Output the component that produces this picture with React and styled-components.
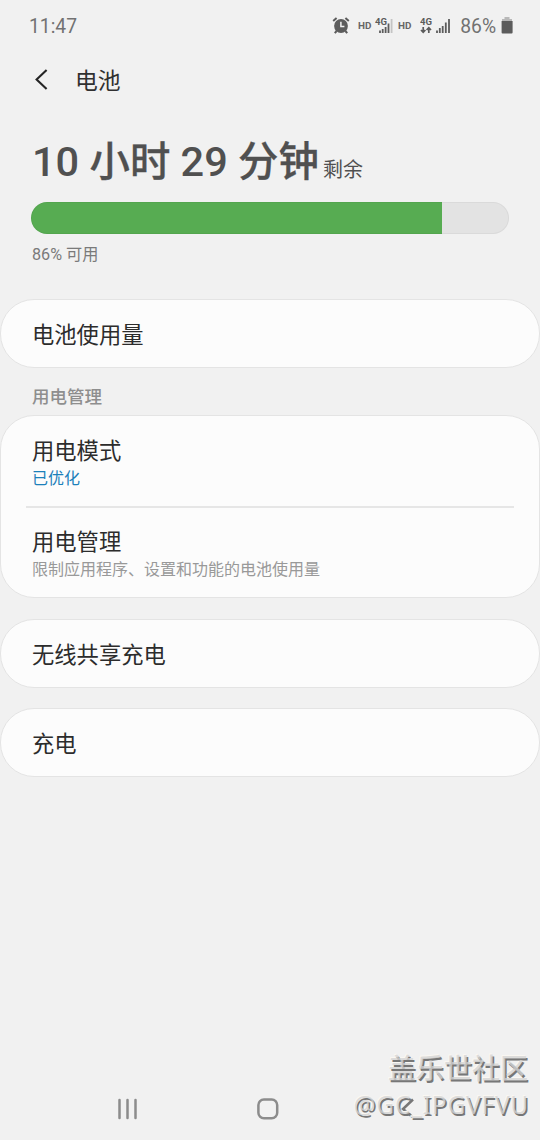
import React from 'react'
import styled, { createGlobalStyle } from 'styled-components'

const GlobalStyle = createGlobalStyle`
  * {
    box-sizing: border-box;
  }
  body {
    margin: 0;
    background-color: #f1f1f1;
    font-family: Roboto, "Noto Sans CJK SC", sans-serif;
  }
`;

const Screen = styled.div`
  position: relative;
  display: flex;
  flex-direction: column;
  width: 540px;
  height: 1140px;
  background-color: #f1f1f1;
  overflow: hidden;
`;

const StatusBar = styled.div`
  display: flex;
  justify-content: space-between;
  align-items: center;
  height: 52px;
  padding: 0 27px 0 29px;
  color: #727272;
  font-size: 19.3px;
`;

const Clock = styled.span`
  padding-top: 2px;
  line-height: 24px;
`;

const StatusIcons = styled.div`
  display: flex;
  align-items: center;
`;

const StatusSvg = styled.svg`
  display: block;
  margin-right: ${props => props.$gap || 0}px;
`;

const Percent = styled.span`
  margin-right: 5px;
  padding-top: 2px;
  line-height: 24px;
`;

const Header = styled.header`
  display: flex;
  align-items: center;
  height: 56px;
  padding-left: 34px;
`;

const Title = styled.h1`
  margin: 0 0 0 26px;
  padding-top: 4px;
  color: #303030;
  font-size: 22.8px;
  font-weight: 400;
  line-height: 32px;
`;

const Summary = styled.section`
  height: 191px;
  padding: 29px 31px 0;
`;

const Remaining = styled.div`
  display: flex;
  align-items: baseline;
  height: 65px;
  padding-left: 1px;
  color: #505050;
  line-height: 50px;
  white-space: nowrap;
`;

const Time = styled.span`
  font-size: 41.5px;
  font-weight: 500;
`;

const Unit = styled.span`
  font-size: 40.4px;
  -webkit-text-stroke: .3px #505050;
`;

const Left = styled.span`
  position: relative;
  top: 1px;
  margin-left: 4px;
  font-size: 20px;
`;

const Track = styled.div`
  height: 32px;
  border: 1px solid rgba(0, 0, 0, .04);
  border-radius: 16px;
  background: linear-gradient(to right, #57ac52 ${props => props.$level}%, #e3e3e3 ${props => props.$level}%) border-box;
`;

const Available = styled.div`
  margin-top: 9px;
  padding-left: 1px;
  color: #7a7a7a;
  font-size: 16.2px;
  line-height: 24px;
`;

const Card = styled.section`
  width: 540px;
  margin-bottom: ${props => props.$gap || 0}px;
  border: 1px solid #e4e4e4;
  border-radius: 34px;
  background-color: #fcfcfc;
`;

const Row = styled.div`
  display: flex;
  flex-direction: column;
  justify-content: center;
  height: ${props => props.$height || 67}px;
  padding: ${props => props.$top || 2}px 31px 0;
`;

const Label = styled.div`
  color: #2c2c2c;
  font-size: 22.3px;
  line-height: 30px;
`;

const Note = styled.div`
  padding-top: 1px;
  color: ${props => props.$active ? '#1c80ba' : '#999999'};
  font-size: 16px;
  line-height: 24px;
`;

const Divider = styled.div`
  height: 2px;
  margin: 0 25px;
  background-color: #e6e6e6;
`;

const Subheader = styled.h2`
  height: 47px;
  margin: 0;
  padding-left: 32px;
  color: #8e8e8e;
  font-size: 17.5px;
  font-weight: 500;
  line-height: 59px;
`;

const NavBar = styled.nav`
  display: flex;
  align-items: center;
  height: 62px;
  margin-top: auto;
  padding-left: 116px;
`;

const NavIcon = styled.svg`
  display: block;
  margin-right: ${props => props.$gap || 0}px;
`;

const Watermark = styled.div`
  position: absolute;
  right: 12px;
  bottom: 16px;
  color: rgba(212, 212, 212, .8);
  text-align: right;
  text-shadow: 1.5px 1.5px 0 #777777, -1px -1px 0 #faf7f2;
  white-space: nowrap;
`;

const Community = styled.div`
  font-family: "Noto Sans CJK SC", sans-serif;
  font-size: 28px;
  font-weight: 500;
  line-height: 38px;
`;

const User = styled.div`
  margin-right: -1px;
  font-family: "Noto Sans", sans-serif;
  font-size: 24.5px;
  letter-spacing: .75px;
  line-height: 38px;
`;

const AlarmIcon = () => (
  <StatusSvg $gap={8} width="18" height="18" viewBox="0 0 18 18">
    <circle cx="9" cy="9" r="6.9" fill="#5c5c5c" />
    <path d="M1.2 4 4.6 1M16.8 4 13.4 1M4.6 14l-1.8 2.2M13.4 14l1.8 2.2" stroke="#5c5c5c" strokeWidth="2" />
    <path d="M8.9 4.8v4.7h3.5" fill="none" stroke="#f1f1f1" strokeWidth="1.5" />
  </StatusSvg>
)

const HdIcon = ({ gap }) => (
  <StatusSvg $gap={gap} width="14" height="12" viewBox="0 0 14 12">
    <text x="0" y="8.6" fill="#666" fontSize="9.8" fontWeight="700" textLength="13.4" lengthAdjust="spacingAndGlyphs">HD</text>
  </StatusSvg>
)

const SignalIcon = () => (
  <StatusSvg $gap={5} width="18" height="20" viewBox="0 0 18 20">
    <path d="M5 14.5V17M7.7 13V17M10.6 11V17M13.5 7.5V17" stroke="#5c5c5c" strokeWidth="1.8" />
    <path d="M16.6 3V17" stroke="#c4c4c4" strokeWidth="1.8" />
    <text x="0" y="9" fill="#5c5c5c" stroke="#f1f1f1" strokeWidth="1" paintOrder="stroke" fontSize="9.8" fontWeight="700" textLength="12" lengthAdjust="spacingAndGlyphs">4G</text>
  </StatusSvg>
)

const DataSignalIcon = () => (
  <StatusSvg $gap={9} width="31" height="20" viewBox="0 0 31 20">
    <text x="0" y="9" fill="#5c5c5c" fontSize="9.8" fontWeight="700" textLength="12" lengthAdjust="spacingAndGlyphs">4G</text>
    <path d="M3.2 11v5M1 14l2.2 2.3L5.4 14M8.8 17v-5M6.6 14l2.2-2.3 2.2 2.3" fill="none" stroke="#5c5c5c" strokeWidth="1.7" />
    <path d="M17 14.5V17M19.8 12V17M22.7 10V17M25.8 6.5V17M29 3V17" stroke="#5c5c5c" strokeWidth="1.8" />
  </StatusSvg>
)

const BatteryIcon = () => (
  <StatusSvg width="12" height="18" viewBox="0 0 12 18">
    <path d="M3.5 0h5v2H11v3H1V2h2.5z" fill="#b8b8b8" />
    <path d="M.6 4h11v11.5q0 1-1 1h-9q-1 0-1-1z" fill="#5c5c5c" />
  </StatusSvg>
)

const App = () => {
  return (
    <>
      <GlobalStyle />
      <Screen>
        <StatusBar>
          <Clock>11:47</Clock>
          <StatusIcons>
            <AlarmIcon />
            <HdIcon gap={3} />
            <SignalIcon />
            <HdIcon gap={8} />
            <DataSignalIcon />
            <Percent>86%</Percent>
            <BatteryIcon />
          </StatusIcons>
        </StatusBar>

        <Header>
          <svg width="15" height="22" viewBox="0 0 15 22">
            <path d="M12.6 1 2.6 10.5l10 9.5" fill="none" stroke="#252525" strokeWidth="2.1" />
          </svg>
          <Title>电池</Title>
        </Header>

        <Summary>
          <Remaining>
            <Time>10 <Unit>小时</Unit> 29 <Unit>分钟</Unit></Time>
            <Left>剩余</Left>
          </Remaining>
          <Track $level={86} />
          <Available>86% 可用</Available>
        </Summary>

        <Card>
          <Row>
            <Label>电池使用量</Label>
          </Row>
        </Card>

        <Subheader>用电管理</Subheader>
        <Card $gap={21}>
          <Row $height={90} $top={4}>
            <Label>用电模式</Label>
            <Note $active>已优化</Note>
          </Row>
          <Divider />
          <Row $height={89} $top={4}>
            <Label>用电管理</Label>
            <Note>限制应用程序、设置和功能的电池使用量</Note>
          </Row>
        </Card>

        <Card $gap={20}>
          <Row>
            <Label>无线共享充电</Label>
          </Row>
        </Card>

        <Card>
          <Row $top={3}>
            <Label>充电</Label>
          </Row>
        </Card>

        <NavBar>
          <NavIcon $gap={116} width="24" height="24" viewBox="0 0 24 24">
            <path d="M3.5 3v18M11.5 3v18M19.5 3v18" stroke="#8c8c8c" strokeWidth="2.5" strokeLinecap="round" />
          </NavIcon>
          <NavIcon $gap={119} width="24" height="24" viewBox="0 0 24 24">
            <rect x="2.4" y="2.5" width="18.8" height="18.8" rx="5.5" fill="none" stroke="#8c8c8c" strokeWidth="2.5" />
          </NavIcon>
          <NavIcon width="20" height="24" viewBox="0 0 20 24">
            <path d="M14 2.5 4 12l9.5 8" fill="none" stroke="#777" strokeWidth="2.5" />
          </NavIcon>
        </NavBar>

        <Watermark>
          <Community>盖乐世社区</Community>
          <User>@GC_IPGVFVU</User>
        </Watermark>
      </Screen>
    </>
  )
}

export default App
